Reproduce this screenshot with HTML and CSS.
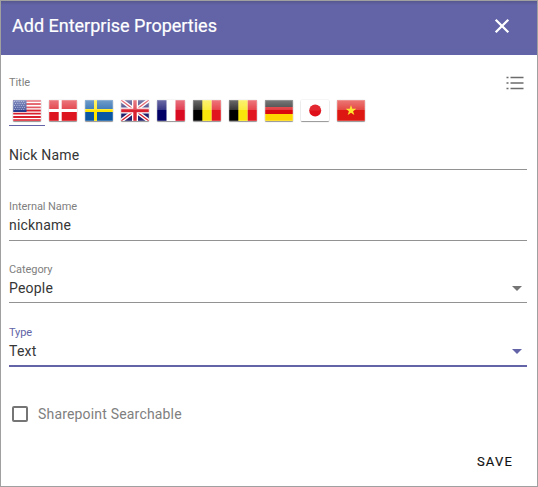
FILE: index.html
```html
<!DOCTYPE html>
<html lang="en">
<head>
<meta charset="utf-8">
<title>Add Enterprise Properties</title>
<link rel="stylesheet" href="styles.css">
</head>
<body>
<svg width="0" height="0" class="defs">
  <defs>
    <linearGradient id="gloss" x1="0" y1="0" x2="0" y2="1">
      <stop offset="0" stop-color="#fff" stop-opacity=".42"/>
      <stop offset=".5" stop-color="#fff" stop-opacity=".2"/>
      <stop offset=".5" stop-color="#fff" stop-opacity="0"/>
    </linearGradient>
    <symbol id="shine" viewBox="0 0 28 21">
      <rect width="28" height="21" fill="url(#gloss)"/>
      <rect x=".5" y=".5" width="27" height="20" fill="none" stroke="#fff" stroke-opacity=".2"/>
    </symbol>
    <symbol id="belgium" viewBox="0 0 28 21">
      <path fill="#000" d="M0 0h10v21H0z"/><path fill="#f9e70c" d="M9.300 0h9.400v21H9.300z"/><path fill="#e0151d" d="M18.700 0H28v21h-9.300z"/>
    </symbol>
  </defs>
</svg>
<div class="dialog">
  <header class="header">
    <h1>Add Enterprise Properties</h1>
    <svg class="close" viewBox="0 0 16 16"><path d="M1.700 1.700l12.600 12.600M14.300 1.700L1.700 14.300"/></svg>
  </header>
  <main class="form">
    <section class="title-field">
      <div class="title-row">
        <span class="label">Title</span>
        <svg class="list" viewBox="0 0 18 14"><path d="M.5 1.500h2M.5 7h2M.5 12.500h2M4.500 1.500H17.500M4.500 7H17.500M4.500 12.500H17.500"/></svg>
      </div>
      <div class="flags">
        <span class="tab active"><svg class="flag" viewBox="0 0 28 21"><path fill="#fff" d="M0 0h28v21H0z"/><path stroke="#d91f2d" stroke-width="1.800" d="M0 .8h28M0 4h28M0 7.300h28M0 10.500h28M0 13.700h28M0 17h28M0 20.200h28"/><path fill="#283a8c" d="M0 0h13.500v12H0z"/><path stroke="#a9b2da" stroke-width=".8" stroke-dasharray="1 1.300" d="M1 1.500h11M2 3.500h10M1 5.500h11M2 7.500h10M1 9.500h11"/><use href="#shine"/></svg></span>
        <span class="tab"><svg class="flag" viewBox="0 0 28 21"><path fill="#dc151f" d="M0 0h28v21H0z"/><path stroke="#fff" stroke-width="3" d="M11.200 0v21M0 10.500h28"/><use href="#shine"/></svg></span>
        <span class="tab"><svg class="flag" viewBox="0 0 28 21"><path fill="#0b57a4" d="M0 0h28v21H0z"/><path stroke="#ffe600" stroke-width="3" d="M10.500 0v21M0 10.500h28"/><use href="#shine"/></svg></span>
        <span class="tab"><svg class="flag" viewBox="0 0 28 21"><path fill="#20206c" d="M0 0h28v21H0z"/><path stroke="#fff" stroke-width="4" d="M0 0l28 21M28 0L0 21"/><path stroke="#d8202e" stroke-width="1.300" d="M0 0l28 21M28 0L0 21"/><path stroke="#fff" stroke-width="6" d="M14 0v21M0 10.500h28"/><path stroke="#d8202e" stroke-width="3.400" d="M14 0v21M0 10.500h28"/><use href="#shine"/></svg></span>
        <span class="tab"><svg class="flag" viewBox="0 0 28 21"><path fill="#fff" d="M0 0h28v21H0z"/><path fill="#000066" d="M0 0h9.500v21H0z"/><path fill="#d90b23" d="M18.500 0H28v21h-9.500z"/><use href="#shine"/></svg></span>
        <span class="tab"><svg class="flag" viewBox="0 0 28 21"><use href="#belgium"/><use href="#shine"/></svg></span>
        <span class="tab"><svg class="flag" viewBox="0 0 28 21"><use href="#belgium"/><use href="#shine"/></svg></span>
        <span class="tab"><svg class="flag" viewBox="0 0 28 21"><path fill="#1a1a1a" d="M0 0h28v7H0z"/><path fill="#d9090e" d="M0 7h28v7H0z"/><path fill="#ffd700" d="M0 14h28v7H0z"/><use href="#shine"/></svg></span>
        <span class="tab"><svg class="flag" viewBox="0 0 28 21"><path fill="#fff" d="M0 0h28v21H0z"/><circle cx="14.200" cy="10.500" r="6" fill="#e0101a"/><path fill="#fff" fill-opacity=".1" d="M0 0h28v10.500H0z"/></svg></span>
        <span class="tab"><svg class="flag" viewBox="0 0 28 21"><path fill="#dd1712" d="M0 0h28v21H0z"/><use href="#shine"/><path fill="#ffe52e" d="M14 5l1.300 3.800h4l-3.200 2.400 1.200 3.900-3.300-2.300-3.300 2.300 1.200-3.900-3.200-2.400h4z"/></svg></span>
      </div>
      <div class="value nick">Nick Name</div>
    </section>
    <section class="field internal">
      <span class="label">Internal Name</span>
      <div class="value">nickname</div>
    </section>
    <section class="field category">
      <span class="label">Category</span>
      <div class="value">People<i class="arrow"></i></div>
    </section>
    <section class="field type focused">
      <span class="label">Type</span>
      <div class="value">Text<i class="arrow"></i></div>
    </section>
    <label class="check"><span class="box"></span>Sharepoint Searchable</label>
    <button class="save">SAVE</button>
  </main>
</div>
</body>
</html>
```
FILE: styles.css
```css
* { box-sizing: border-box; }
body { margin: 0; background: #fff; font-family: Roboto, "Liberation Sans", sans-serif; }
.defs { position: absolute; }
.dialog { height: 487px; border: 1px solid #a0a0a0; display: flex; flex-direction: column; }
.header {
  height: 54px;
  flex: none;
  display: flex;
  align-items: center;
  justify-content: space-between;
  padding: 0 27px 4px 11px;
  background: linear-gradient(#57578f, #6264a7 4px);
  color: #fff;
}
.header h1 { margin: 0; font-size: 18px; line-height: 24px; font-weight: 400; -webkit-text-stroke: .2px #fff; }
.close { width: 16px; height: 16px; fill: none; stroke: #fff; stroke-width: 2.3; }
.form { display: flex; flex-direction: column; padding: 21px 10px 0 8px; }
.title-row { display: flex; justify-content: space-between; height: 18px; }
.label { display: block; padding-top: 1px; font-size: 11px; line-height: 12px; letter-spacing: -.07px; color: #808080; }
.list { width: 18px; height: 14px; margin-right: 3px; fill: none; stroke: #6c6c6c; stroke-width: 1.700; }
.flags { display: flex; height: 32px; }
.tab { width: 36px; padding: 6px 4px 0; border-bottom: 1px solid transparent; }
.tab.active { border-color: #6264a7; }
.flag { display: block; width: 28px; height: 21px; border-radius: 1px; box-shadow: 0 1px 1px rgba(0,0,0,.4), 0 0 1px rgba(0,0,0,.35); }
.value {
  display: flex;
  align-items: center;
  justify-content: space-between;
  height: 25px;
  padding-bottom: 4px;
  border-bottom: 1px solid #929292;
  font-size: 14px;
  line-height: 20px;
  letter-spacing: .2px;
  color: #363636;
}
.nick { height: 44px; padding-top: 19px; }
.field .label { margin-bottom: 2px; }
.internal { margin-top: 30px; }
.internal .value { height: 26px; padding-bottom: 5px; }
.category { margin-top: 22px; }
.type { margin-top: 23px; }
.focused .label { color: #6264a7; }
.focused .value { height: 26px; border-bottom: 2px solid #6264a7; }
.arrow { margin-right: 5.500px; border: 5px solid transparent; border-top-color: #757575; border-bottom: 0; }
.focused .arrow { border-top-color: #6264a7; }
.check { display: flex; align-items: center; gap: 10px; height: 20px; margin: 37px 0 0 3px; font-size: 14px; letter-spacing: .18px; color: #808080; }
.box { width: 16px; height: 16px; border: 2px solid #757575; border-radius: 2px; }
.save { align-self: flex-end; height: 36px; margin: 20px 6px 0 0; padding: 0 8px; border: 0; background: none; font: 400 13px/36px Roboto, sans-serif; letter-spacing: 1.200px; color: #111; -webkit-text-stroke: .15px #111; }
```
